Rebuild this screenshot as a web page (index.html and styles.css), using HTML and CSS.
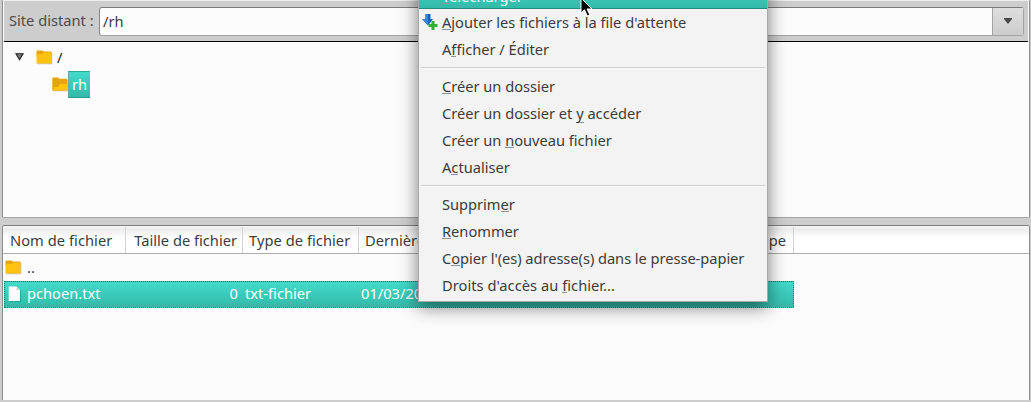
FILE: index.html
```html
<!DOCTYPE html>
<html lang="fr">
<head>
<meta charset="utf-8">
<title>Site distant</title>
<link rel="stylesheet" href="styles.css">
</head>
<body>
<main class="app">
  <section class="panel remote">
    <div class="addressbar">
      <span class="label">Site distant :</span>
      <div class="combo"><span class="value">/rh</span><span class="drop"><svg width="8" height="6" viewBox="0 0 8 6"><path d="M0 0H8V1L4 6L0 1Z" fill="#484848"/></svg></span></div>
    </div>
    <div class="tree">
      <div class="node">
        <svg class="twist" width="10" height="8" viewBox="0 0 10 8"><path d="M.9.8H8.1L4.5 6.8Z" fill="#777" stroke="#222" stroke-width="1.1"/></svg>
        <svg class="folder" width="17" height="15" viewBox="0 0 17 15"><path d="M1 2.5H16.4V14.3H1.4Z" fill="#c9c4b6"/><path d="M.5 1.5Q.5.5 1.5.5H6.5L8 1.5H14.5Q15.5 1.5 15.5 2.5V6H.5Z" fill="#e4a50f"/><path d="M.5 4H6L8 2.5H15.5V13.5H.5Z" fill="#ffc20e"/></svg>
        <span>/</span>
      </div>
      <div class="node child">
        <svg class="folder" width="17" height="15" viewBox="0 0 17 15"><path d="M1 2.5H16V14.3H1Z" fill="#c9c4b6"/><path d="M.3 1.5Q.3.5 1.3.5H6L7.5 1.7H14Q15 1.7 15 2.7V13.5H.3Z" fill="#e4a50f"/><path d="M.3 13.5L2 10H6L8 7H16.5L14.7 13.5Z" fill="#ffc20e"/></svg>
        <span class="chosen">rh</span>
      </div>
    </div>
  </section>
  <section class="panel files">
    <div class="cols head">
      <span class="wide">Nom de fichier</span><span class="size">Taille de fichier</span><span class="wide">Type de fichier</span><span>Dernière</span><span class="group">Propriétaire/Groupe</span>
    </div>
    <div class="cols row">
      <span class="name"><svg class="folder" width="17" height="15" viewBox="0 0 17 15"><path d="M1 2.5H16.4V14.3H1.4Z" fill="#c9c4b6"/><path d="M.5 1.5Q.5.5 1.5.5H6.5L8 1.5H14.5Q15.5 1.5 15.5 2.5V6H.5Z" fill="#e4a50f"/><path d="M.5 4H6L8 2.5H15.5V13.5H.5Z" fill="#ffc20e"/></svg>..</span>
    </div>
    <div class="cols row selected">
      <span class="name"><svg class="doc" width="14" height="16" viewBox="0 0 14 16"><path d="M1.5 1.5H9L13 5V16H1.5Z" fill="#218e83" opacity=".6"/><path d="M.7.5H8.5L12 4V15H.7Z" fill="#fdfdfd"/><path d="M8.5.5V4H12Z" fill="#cdd5d4"/></svg>pchoen.txt</span><span class="size">0</span><span>txt-fichier</span><span>01/03/2021</span>
    </div>
  </section>
  <div class="strip"></div>
</main>
<nav class="menu">
  <div class="item active"><svg class="icon" width="16" height="16" viewBox="0 0 16 16"><path d="M5 0H10V6H13L7.5 13.5L2 6H5Z" fill="#1765c0"/></svg><u>T</u>élécharger</div>
  <div class="item"><svg class="icon" width="16" height="16" viewBox="0 0 16 16"><path d="M3.5 0H8.5V5H11L6 11.5L0 5H3.5Z" fill="#1765c0"/><path d="M3.5 0H6V11.3L0 5H3.5Z" fill="#3787d4"/><path d="M9.5 7H12.5V10H15.5V13H12.5V16H9.5V13H6.5V10H9.5Z" fill="#2eb136"/></svg><u>A</u>jouter les fichiers à la file d'attente</div>
  <div class="item split">A<u>f</u>ficher / Éditer</div>
  <div class="sep"></div>
  <div class="item"><u>C</u>réer un dossier</div>
  <div class="item">Créer un dossier et <u class="low">y</u> accéder</div>
  <div class="item">Créer un <u>n</u>ouveau fichier</div>
  <div class="item">A<u>c</u>tualiser</div>
  <div class="sep"></div>
  <div class="item">Supprim<u>e</u>r</div>
  <div class="item"><u>R</u>enommer</div>
  <div class="item tight">C<u>o</u>pier l'(es) adresse(s) dans le presse-papier</div>
  <div class="item split loose">Droits d'accès au <u>f</u>ichier...</div>
</nav>
<svg class="cursor" width="14" height="21" viewBox="0 0 14 21"><path d="M1 1V16L4.5 12.8L7.3 19L9.8 17.8L7 12H12Z" transform="translate(0 -2)" fill="#000" stroke="#fff"/></svg>
</body>
</html>
```

FILE: styles.css
```css
* { box-sizing: border-box; }
body {
  margin: 0;
  width: 1031px;
  height: 402px;
  overflow: hidden;
  position: relative;
  background: #cdcdcd;
  color: #3c3c3c;
  font: 14.67px/27px "Noto Sans", sans-serif;
  white-space: nowrap;
}
svg { display: block; flex: none; }
.app { height: 402px; padding: 0 1px 0 2px; display: flex; flex-direction: column; }
.panel { border: 1px solid #8c8c8c; background: #fcfcfc; overflow: hidden; flex: none; }
.remote {
  height: 218px;
  border-top: 1px solid #eeeeee;
  border-bottom-color: #a4a4a4;
  border-radius: 0 0 2px 2px;
  padding: 0 1px;
}
.addressbar {
  height: 41px;
  display: flex;
  align-items: center;
  gap: 6px;
  padding: 0 4px 2px 5px;
  background: #cdcdcd;
  border-bottom: 1px solid #000;
}
.label { width: 84px; color: #4b4b4b; }
.combo {
  flex: 1;
  height: 29px;
  display: flex;
  border: 1px solid #a4a4a4;
  border-top-color: #7c7c7c;
  border-left-color: #888;
  border-radius: 3px;
  background: #fcfcfc;
  margin-top: 2px;
}
.value { flex: 1; padding-left: 3px; line-height: 27px; }
.drop {
  width: 31px;
  border-left: 1px solid #a4a4a4;
  background: linear-gradient(#dedede, #cdcdcd);
  display: flex;
  align-items: center;
  justify-content: center;
}
.tree { padding-top: 2px; }
.node { height: 27px; display: flex; align-items: center; padding-left: 11px; color: #222; }
.twist { margin-right: 11px; margin-top: -1px; }
.node .folder { margin-right: 4px; }
.child { padding-left: 47px; }
.child .folder { margin: 0 -1px 0 1px; }
.chosen, .selected { background: linear-gradient(#42dbca, #34b9a9); color: #fff; }
.chosen {
  width: 22px;
  height: 27px;
  line-height: 25px;
  padding-left: 3px;
  border-left: 1px solid #6aa;
  border-top: 1px solid #2ba79a;
  border-bottom: 1px solid #2b9b8f;
}
.files { margin-top: 7px; height: 175px; border-top-color: #7e7e7e; border-bottom: 0; border-radius: 3px 3px 0 0; }
.cols { display: grid; grid-template-columns: 123px 117px 116px 115px 320px; }
.head {
  height: 28px;
  padding-top: 1px;
  background: linear-gradient(#f6f6f6, #ececec 3px, #ffffff 12px, #ffffff);
  border-bottom: 1px solid #acacac;
}
.head span { padding-left: 7px; border-right: 1px solid #d2d2d2; line-height: 27px; overflow: hidden; }
.head span:nth-child(n+3) { padding-left: 6px; }
.head .wide { letter-spacing: .05px; }
.head .size { padding: 0 5px 0 0; text-align: right; }
.head .group { padding-right: 7px; text-align: right; }
.row { height: 27px; }
.row span { padding-left: 2px; line-height: 25px; }
.row .name { display: flex; align-items: center; gap: 5px; height: 26px; }
.row .size { text-align: right; padding-right: 7px; }
.selected { margin-left: 1px; width: 790px; border: 1px dotted #27776e; }
.selected span { line-height: 23px; padding-left: 0; }
.selected .name { gap: 5px; padding-left: 3px; height: 23px; }
.strip { height: 2px; }
.menu {
  position: absolute;
  left: 418px;
  top: -19px;
  width: 350px;
  height: 321px;
  border: 1px solid #a9a9a9;
  background: #f3f3f3;
  box-shadow: 0 5px 17px rgba(0, 0, 0, .52);
}
.item { height: 27px; padding-left: 23px; position: relative; line-height: 27px; letter-spacing: -.02px; font-variant-ligatures: common-ligatures; }
.split { font-variant-ligatures: none; }
.tight { letter-spacing: -.05px; }
.loose { letter-spacing: .04px; }
.item u { text-decoration: none; background: linear-gradient(#929292, #929292) 0 17px / 100% 1px no-repeat; }
.item .low { background-position: 0 19px; }
.active { color: #fff; line-height: 29px; background: linear-gradient(#42dbca, #34b9a9); border-bottom: 1px solid #278a7f; }
.sep { height: 10px; padding: 4px 2px; }
.sep::before { content: ""; display: block; height: 1px; border-top: 1px solid #cecece; background: #fafafa; }
.icon { position: absolute; left: 3px; top: 5px; }
.cursor { position: absolute; left: 580px; top: -1px; }
```
